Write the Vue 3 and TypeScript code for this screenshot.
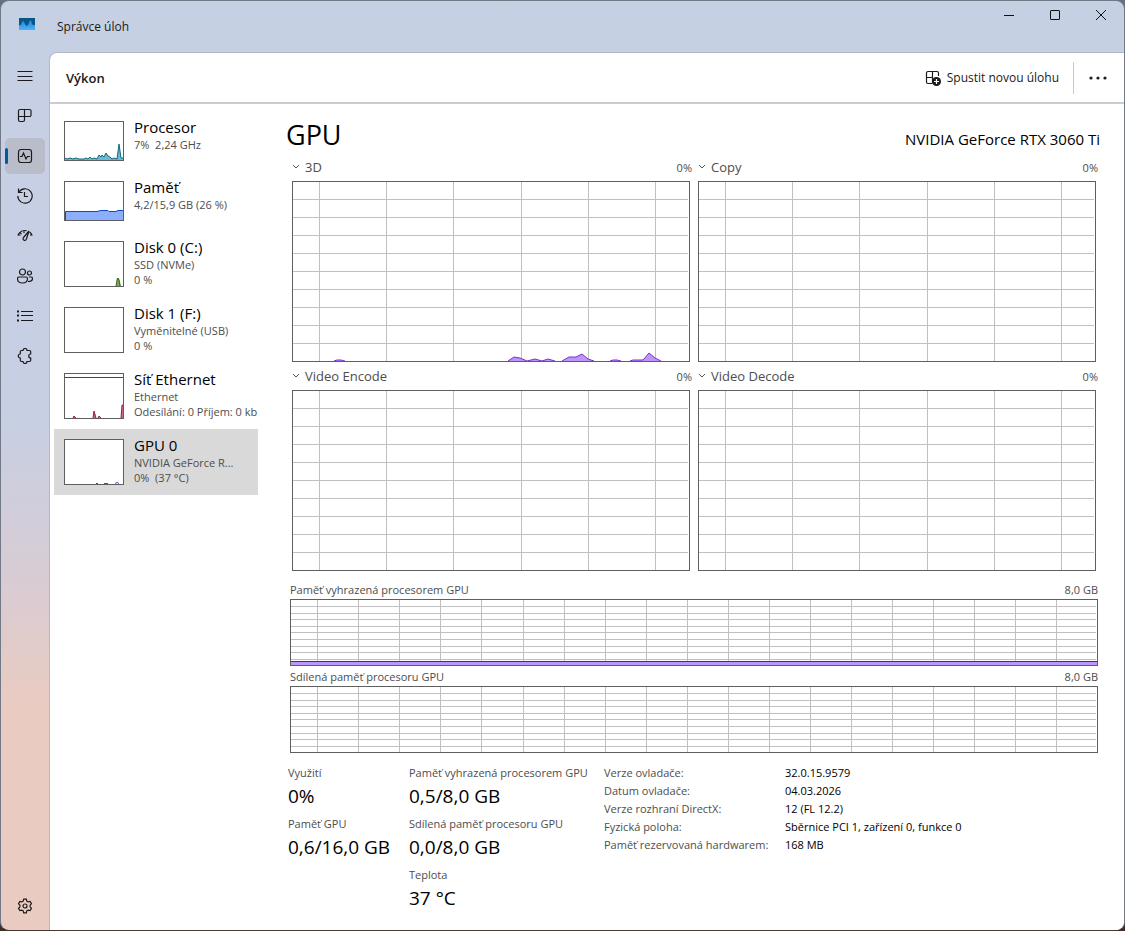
<script setup lang="ts">
interface Resource {
  name: string
  lines: string[]
  kind: string
  height: number
  area: string
  line: string
  active?: boolean
}

interface Engine {
  id: string
  name: string
  area: string
}

const resources: Resource[] = [
  {
    name: 'Procesor',
    lines: ['7%  2,24 GHz'],
    kind: 'cpu',
    height: 38,
    area: 'M0 38V36L2 37L5 36L8 37L11 36L14 37H19L21 36L23 37L25 35L27 37L29 36L32 37L34 33L36 35L37 33L39 35L41 31L43 34L45 35L47 37L49 36L52 37L54 22L56 36L58 36V38Z',
    line: 'M0 36L2 37L5 36L8 37L11 36L14 37H19L21 36L23 37L25 35L27 37L29 36L32 37L34 33L36 35L37 33L39 35L41 31L43 34L45 35L47 37L49 36L52 37L54 22L56 36L58 36',
  },
  {
    name: 'Paměť',
    lines: ['4,2/15,9 GB (26 %)'],
    kind: 'ram',
    height: 38,
    area: 'M0 38V29.5H32L36 28.5H43L44 29.5H51L53 28.5H58V38Z',
    line: 'M0.5 38V29.5H32L36 28.5H43L44 29.5H51L53 28.5H58',
  },
  {
    name: 'Disk 0 (C:)',
    lines: ['SSD (NVMe)', '0 %'],
    kind: 'disk',
    height: 44,
    area: 'M51 44L52 36H54L56 44Z',
    line: 'M51 44L52.5 36L54 38L55 44',
  },
  { name: 'Disk 1 (F:)', lines: ['Vyměnitelné (USB)', '0 %'], kind: 'disk', height: 44, area: '', line: '' },
  {
    name: 'Síť Ethernet',
    lines: ['Ethernet', 'Odesílání: 0 Příjem: 0 kb'],
    kind: 'network',
    height: 44,
    area: 'M8 44L9 42L11 44ZM28 44L29 37L31 44ZM33 44L34 42L36 44ZM56 44L57 31H58V44Z',
    line: 'M0 3.5H58M8 44L9 42L11 44M28 44L29 37L31 44M33 44L34 42L36 44M56 44L57 31H58',
  },
  {
    name: 'GPU 0',
    lines: ['NVIDIA GeForce R...', '0%  (37 °C)'],
    kind: 'gpu',
    height: 44,
    area: '',
    line: 'M31 43.5H33M39 43.5H43M50 43.5L52 42.5L54 43.5',
    active: true,
  },
]

const engines: Engine[] = [
  {
    id: '3d',
    name: '3D',
    area: 'M41 179L44 178H48L52 179M215 179L221 175L227 176L234 179L242 177L249 179L255 177L262 179M269 179L276 175H283L289 172L295 177L301 179M317 179L320 178H324L328 179M337 179L340 178H350L356 171L362 176L368 179',
  },
  { id: 'copy', name: 'Copy', area: '' },
  { id: 'encode', name: 'Video Encode', area: '' },
  { id: 'decode', name: 'Video Decode', area: '' },
]

const engineColumns = [26, 93, 160, 228, 295, 362]
const engineRows = [17, 35, 53, 71, 89, 107, 125, 143, 161]
const memoryColumns = [26, 67, 108, 149, 190, 232, 273, 314, 355, 396, 437, 478, 519, 560, 601, 642, 683, 724, 765]
const memoryRows = [6, 13, 19, 26, 32, 39, 46, 52, 59]

const memories = [
  { name: 'Paměť vyhrazená procesorem GPU', total: '8,0 GB', used: true },
  { name: 'Sdílená paměť procesoru GPU', total: '8,0 GB', used: false },
]

const statColumns = [
  [
    { label: 'Využití', value: '0%' },
    { label: 'Paměť GPU', value: '0,6/16,0 GB' },
  ],
  [
    { label: 'Paměť vyhrazená procesorem GPU', value: '0,5/8,0 GB' },
    { label: 'Sdílená paměť procesoru GPU', value: '0,0/8,0 GB' },
    { label: 'Teplota', value: '37 °C' },
  ],
]

const facts = [
  ['Verze ovladače:', '32.0.15.9579'],
  ['Datum ovladače:', '04.03.2026'],
  ['Verze rozhraní DirectX:', '12 (FL 12.2)'],
  ['Fyzická poloha:', 'Sběrnice PCI 1, zařízení 0, funkce 0'],
  ['Paměť rezervovaná hardwarem:', '168 MB'],
]

function gridPath(columns: number[], rows: number[], width: number, height: number): string {
  const vertical = columns.map((x) => `M${x + 0.5} 0V${height}`).join('')
  const horizontal = rows.map((y) => `M0 ${y + 0.5}H${width - 1}`).join('')
  return vertical + horizontal
}

const engineGrid = gridPath(engineColumns, engineRows, 396, 179)
const memoryGrid = gridPath(memoryColumns, memoryRows, 806, 65)
</script>

<template>
  <div class="window">
    <header class="titlebar">
      <svg class="logo" viewBox="0 0 16 12" aria-hidden="true">
        <defs>
          <linearGradient id="logo-wave" x1="0" y1="0" x2="0" y2="1">
            <stop offset="0" stop-color="#1f86c8" />
            <stop offset="1" stop-color="#4db0ff" />
          </linearGradient>
        </defs>
        <rect width="16" height="12" fill="#0a5488" />
        <path d="M0 7H2L3 4L4.500 3L6 6L7.500 8L9 7L10.500 3L12 2L13 6L14 7H16V12H0Z" fill="url(#logo-wave)" />
      </svg>
      <span class="app-name">Správce úloh</span>
      <div class="controls">
        <button type="button" aria-label="Minimalizovat">
          <svg viewBox="0 0 12 12"><path d="M1 6.500H11" /></svg>
        </button>
        <button type="button" aria-label="Maximalizovat">
          <svg viewBox="0 0 12 12"><rect x="1.500" y="1.500" width="9" height="9" rx="0.500" /></svg>
        </button>
        <button type="button" aria-label="Zavřít">
          <svg viewBox="0 0 12 12"><path d="M1 1L11 11M11 1L1 11" /></svg>
        </button>
      </div>
    </header>

    <div class="body">
      <nav class="rail" aria-label="Navigace">
        <button type="button" aria-label="Otevřít navigaci">
          <svg viewBox="0 0 16 16"><path d="M0.500 3.500H15.500M0.500 8.500H15.500M0.500 12.500H15.500" /></svg>
        </button>
        <button type="button" aria-label="Procesy">
          <svg viewBox="0 0 16 16">
            <path d="M3 1.500H12.500A1.500 1.500 0 0 1 14 3V7A1.500 1.500 0 0 1 12.500 8.500H1.500V3A1.500 1.500 0 0 1 3 1.500ZM1.500 8.500V12A1.500 1.500 0 0 0 3 13.500H6A1.500 1.500 0 0 0 7.500 12V1.500" />
          </svg>
        </button>
        <button type="button" class="active" aria-label="Výkon" aria-current="page">
          <svg viewBox="0 0 16 16">
            <rect x="1.500" y="1.500" width="13" height="13" rx="2.500" />
            <path d="M3 8.500H5L6.500 5L9 11L10.500 8.500H13" />
          </svg>
        </button>
        <button type="button" aria-label="Historie aplikací">
          <svg viewBox="0 0 16 16">
            <path d="M1.500 0.500V4.500H5.500M1.800 4.300A7.200 7.200 0 1 1 0.800 8M7.500 4V8.500H11" />
          </svg>
        </button>
        <button type="button" aria-label="Aplikace po spuštění">
          <svg viewBox="0 0 16 16">
            <path d="M0.800 7.500A8 8 0 0 1 9.500 2.600M12.600 4A8 8 0 0 1 15.200 7.500M1 7H3.500M3 4.500L4.500 6M7 3V5M13 7H15M12 3L6.500 9.500A1.700 1.700 0 1 0 9.400 11L12 3" />
          </svg>
        </button>
        <button type="button" aria-label="Uživatelé">
          <svg viewBox="0 0 16 16">
            <circle cx="5.500" cy="4" r="3" />
            <circle cx="12.500" cy="5" r="2" />
            <path d="M2 9H9Q10.500 9 10.500 10.500Q10.500 15 5.500 15Q0.500 15 0.500 10.500Q0.500 9 2 9ZM12 9H14Q15.500 9 15.500 10.500Q15.500 13.500 11 13.500" />
          </svg>
        </button>
        <button type="button" aria-label="Podrobnosti">
          <svg viewBox="0 0 16 16">
            <path d="M4 3.500H16M4 7.500H16M4 12.500H16" />
            <path class="dots" d="M0 3.500H2M0 7.500H2M0 12.500H2" />
          </svg>
        </button>
        <button type="button" aria-label="Služby">
          <svg viewBox="0 0 16 16">
            <path d="M4.500 2.500H6A2 2 0 0 1 10 2.500H12.500Q13.700 2.500 13.700 3.700V6A2 2 0 0 0 13.700 10V12.300Q13.700 13.500 12.500 13.500H10A2 2 0 0 1 6 13.500H4.500Q3.300 13.500 3.300 12.300V10A2 2 0 0 1 3.300 6V3.700Q3.300 2.500 4.500 2.500Z" />
          </svg>
        </button>
        <button type="button" class="settings" aria-label="Nastavení">
          <svg viewBox="0 0 16 16">
            <path d="M6.700 1.200H9.300L9.800 3.100L11.200 3.900L13.100 3.400L14.500 5.700L13.100 7.200V8.800L14.500 10.300L13.100 12.600L11.200 12.100L9.800 12.900L9.300 14.800H6.700L6.200 12.900L4.800 12.100L2.900 12.600L1.500 10.300L2.900 8.800V7.200L1.500 5.700L2.900 3.400L4.800 3.900L6.200 3.100Z" />
            <circle cx="8" cy="8" r="2" />
          </svg>
        </button>
      </nav>

      <main class="panel">
        <div class="commands">
          <h1>Výkon</h1>
          <button type="button" class="run">
            <svg viewBox="0 0 16 16">
              <path d="M7 13.500H3A1.500 1.500 0 0 1 1.500 12V3A1.500 1.500 0 0 1 3 1.500H12A1.500 1.500 0 0 1 13.500 3V6M1.500 7.500H8M7.500 1.500V13.500" />
              <circle class="plus-disc" cx="11.500" cy="11.500" r="4.500" />
              <path class="plus" d="M11.500 9V14M9 11.500H14" />
            </svg>
            <span>Spustit novou úlohu</span>
          </button>
          <button type="button" class="more" aria-label="Další možnosti">
            <svg viewBox="0 0 18 4">
              <circle cx="2" cy="2" r="1.600" /><circle cx="9" cy="2" r="1.600" /><circle cx="16" cy="2" r="1.600" />
            </svg>
          </button>
        </div>

        <div class="content">
          <div class="resources">
            <button
              v-for="resource in resources"
              :key="resource.name"
              type="button"
              class="resource"
              :class="{ selected: resource.active }"
            >
              <svg
                class="thumb"
                :class="[resource.kind, { short: resource.height === 38 }]"
                :viewBox="`0 0 58 ${resource.height}`"
                aria-hidden="true"
              >
                <path class="area" :d="resource.area" />
                <path class="line" :d="resource.line" />
              </svg>
              <span class="resource-text">
                <span class="resource-name">{{ resource.name }}</span>
                <span v-for="text in resource.lines" :key="text" class="resource-line">{{ text }}</span>
              </span>
            </button>
          </div>

          <section class="detail">
            <div class="heading">
              <h2>GPU</h2>
              <span class="model">NVIDIA GeForce RTX 3060 Ti</span>
            </div>

            <div class="engines">
              <div v-for="engine in engines" :key="engine.id" class="engine">
                <div class="engine-head">
                  <button type="button" class="engine-name">
                    <svg viewBox="0 0 8 8" aria-hidden="true"><path d="M1 2L4 5L7 2" /></svg>
                    <span>{{ engine.name }}</span>
                  </button>
                  <span class="percent">0%</span>
                </div>
                <svg class="chart" viewBox="0 0 396 179" preserveAspectRatio="none" aria-hidden="true">
                  <path class="grid" :d="engineGrid" />
                  <path v-if="engine.area" class="load" :d="engine.area" />
                </svg>
              </div>
            </div>

            <div v-for="memory in memories" :key="memory.name" class="memory">
              <div class="memory-head">
                <span>{{ memory.name }}</span>
                <span>{{ memory.total }}</span>
              </div>
              <svg class="chart memory-chart" viewBox="0 0 806 65" preserveAspectRatio="none" aria-hidden="true">
                <path class="grid" :d="memoryGrid" />
                <rect v-if="memory.used" class="used" y="61" width="806" height="4" />
                <path v-if="memory.used" class="used-line" d="M0 61.500H806" />
              </svg>
            </div>

            <div class="stats">
              <dl v-for="(column, index) in statColumns" :key="index">
                <div v-for="stat in column" :key="stat.label" class="stat">
                  <dt>{{ stat.label }}</dt>
                  <dd>{{ stat.value }}</dd>
                </div>
              </dl>
              <table>
                <tbody>
                  <tr v-for="fact in facts" :key="fact[0]">
                    <th scope="row">{{ fact[0] }}</th>
                    <td>{{ fact[1] }}</td>
                  </tr>
                </tbody>
              </table>
            </div>
          </section>
        </div>
      </main>
    </div>
  </div>
</template>

<style>
body {
  background: linear-gradient(#667083, #6b6f7c 45%, #4a3932 75%, #3c2f2a);
}
</style>

<style scoped>
.window {
  box-sizing: border-box;
  min-height: 100vh;
  display: flex;
  flex-direction: column;
  border: 1px solid #727986;
  border-bottom-color: #4a3932;
  border-radius: 9px;
  overflow: hidden;
  background: linear-gradient(#c6d0e3 0, #c7cfe3 45%, #d8ccd4 62%, #eacbc1 76%, #eacbc1);
  font-family: "Open Sans", "Noto Sans", sans-serif;
  font-size: 12px;
  color: #1a1a1a;
}

button {
  border: 0;
  padding: 0;
  background: none;
  color: inherit;
  font: inherit;
}

svg {
  display: block;
}

.titlebar {
  display: flex;
  height: 51px;
  padding-left: 18px;
}

.logo {
  width: 16px;
  height: 12px;
  margin-top: 17px;
}

.app-name {
  margin: 17px 0 0 22px;
  line-height: 18px;
}

.controls {
  display: flex;
  margin-left: auto;
}

.controls button {
  width: 46px;
  height: 28px;
  display: grid;
  place-items: center;
}

.controls svg {
  width: 12px;
  height: 12px;
  fill: none;
  stroke: #111;
}

.body {
  flex: 1;
  display: flex;
}

.rail {
  width: 48px;
  box-sizing: border-box;
  padding: 6px 4px;
  display: flex;
  flex-direction: column;
  gap: 4px;
}

.rail button {
  position: relative;
  width: 40px;
  height: 36px;
  display: grid;
  place-items: center;
  border-radius: 5px;
}

.rail svg {
  width: 16px;
  height: 16px;
  fill: none;
  stroke: #1b1b1b;
  stroke-width: 1.2;
}

.rail .dots {
  stroke-width: 2;
}

.rail .active {
  background: #b9bdca;
}

.rail .active::before {
  content: "";
  position: absolute;
  left: 0;
  top: 10px;
  width: 3px;
  height: 16px;
  border-radius: 2px;
  background: #005a9e;
}

.rail .settings {
  margin-top: auto;
}

.panel {
  flex: 1;
  min-width: 0;
  display: flex;
  flex-direction: column;
  border: 1px solid #b3b8c5;
  border-width: 1px 0 0 1px;
  border-radius: 8px 0 0 0;
  background: #fff;
}

.commands {
  display: flex;
  align-items: center;
  height: 49px;
  padding: 0 9px 0 16px;
  border-bottom: 2px solid #c9ccd3;
}

h1 {
  margin: 0 auto 0 0;
  font-size: 13px;
  font-weight: 600;
}

.run {
  display: flex;
  align-items: center;
  gap: 6px;
  height: 32px;
  padding-right: 14px;
  border-right: 1px solid #c9c9c9;
}

.run svg {
  width: 16px;
  height: 16px;
  fill: none;
  stroke: #1b1b1b;
  stroke-width: 1.2;
}

.run .plus-disc {
  fill: #1b1b1b;
  stroke: none;
}

.run .plus {
  stroke: #fff;
}

.more {
  width: 34px;
  height: 32px;
  margin-left: 7px;
  display: grid;
  place-items: center;
}

.more svg {
  width: 18px;
  height: 4px;
  fill: #1b1b1b;
}

.content {
  flex: 1;
  display: flex;
}

.resources {
  flex: none;
  box-sizing: border-box;
  width: 211px;
  padding: 7px 3px 0 4px;
}

.resource {
  width: 100%;
  display: flex;
  align-items: flex-start;
  gap: 10px;
  padding: 10px;
  text-align: left;
}

.resource.selected {
  background: #d9d9d9;
}

.thumb {
  flex: none;
  width: 58px;
  height: 44px;
  border: 1px solid #5f5f5f;
  background: #fff;
}

.thumb.short {
  height: 38px;
}

.line {
  fill: none;
}

.cpu .area { fill: #6cb9d6; }
.cpu .line { stroke: #116a7e; }
.ram .area { fill: #8baeff; }
.ram .line { stroke: #0a4fb8; }
.disk .area { fill: #7fa656; }
.disk .line { stroke: #3f6b20; }
.network .area { fill: #c66a8c; }
.network .line { stroke: #a8144a; }
.gpu .line { stroke: #7a2fd0; }

.resource-text {
  display: flex;
  flex-direction: column;
  margin: -3px 0 -8px;
  white-space: pre;
}

.resource-name {
  font-size: 15px;
  line-height: 19px;
  color: #000;
}

.resource-line {
  font-size: 11px;
  line-height: 15px;
  color: #4d4d4d;
}

.detail {
  flex: 1;
  min-width: 0;
  padding: 11px 24px 8px 25px;
}

.heading {
  display: flex;
  justify-content: space-between;
  align-items: baseline;
  height: 38px;
  line-height: 40px;
  color: #000;
}

h2 {
  margin: 0;
  font-size: 27px;
  font-weight: 400;
}

.model {
  font-size: 15px;
}

.engines {
  display: grid;
  grid-template-columns: 1fr 1fr;
  gap: 0 8px;
  padding: 0 4px 0 6px;
}

.engine-head {
  display: flex;
  justify-content: space-between;
  align-items: center;
  height: 28px;
  margin-right: -2px;
  color: #4d4d4d;
  font-size: 11px;
}

.engine-name {
  display: flex;
  align-items: center;
  gap: 5px;
  font-size: 13px;
}

.engine-name svg {
  width: 8px;
  height: 8px;
  fill: none;
  stroke: #555;
}

.chart {
  box-sizing: border-box;
  width: 100%;
  height: 181px;
  border: 1px solid #5f5f5f;
}

.grid {
  fill: none;
  stroke: #c0c0c0;
  shape-rendering: crispEdges;
}

.load {
  fill: #bd96fb;
  stroke: #7a2fd0;
}

.memory {
  margin: 0 2px 0 4px;
}

.memory-head {
  display: flex;
  justify-content: space-between;
  align-items: center;
  height: 20px;
  font-size: 11px;
  color: #4d4d4d;
}

.engines + .memory {
  margin-top: 8px;
}

.memory-chart {
  height: 67px;
}

.used {
  fill: #bd96fb;
}

.used-line {
  fill: none;
  stroke: #6a0dbf;
}

.stats {
  display: grid;
  grid-template-columns: 121px 195px 1fr;
  padding: 11px 0 0 2px;
  color: #000;
}

dl,
dd {
  margin: 0;
}

.stat {
  height: 51px;
  white-space: nowrap;
}

dt {
  line-height: 18px;
  font-size: 11px;
  color: #4d4d4d;
}

dd {
  line-height: 28px;
  font-size: 19px;
}

table {
  justify-self: start;
  align-self: start;
  border-collapse: collapse;
  font-size: 11px;
  line-height: 18px;
}

th {
  min-width: 181px;
  padding: 0;
  font-weight: 400;
  text-align: left;
  color: #4d4d4d;
}

td {
  padding: 0;
}
</style>
